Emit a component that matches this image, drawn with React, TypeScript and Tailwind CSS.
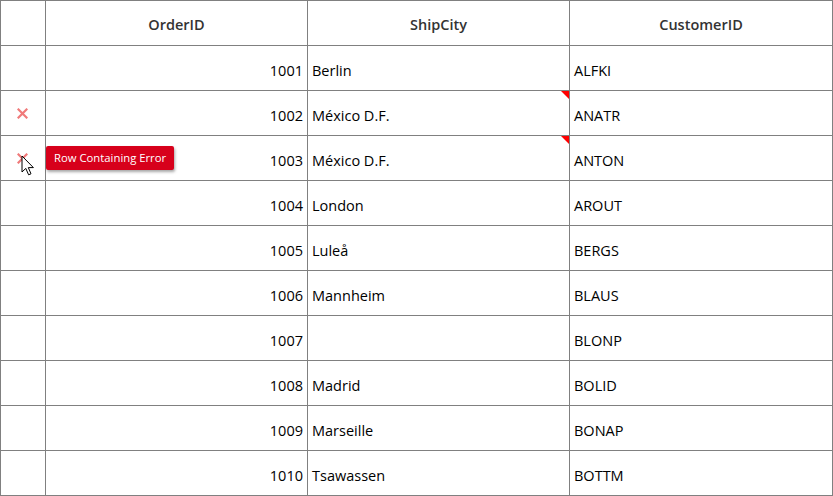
const ROWS = [
  { id: 1001, city: 'Berlin', customer: 'ALFKI', error: false },
  { id: 1002, city: 'México D.F.', customer: 'ANATR', error: true },
  { id: 1003, city: 'México D.F.', customer: 'ANTON', error: true },
  { id: 1004, city: 'London', customer: 'AROUT', error: false },
  { id: 1005, city: 'Luleå', customer: 'BERGS', error: false },
  { id: 1006, city: 'Mannheim', customer: 'BLAUS', error: false },
  { id: 1007, city: '', customer: 'BLONP', error: false },
  { id: 1008, city: 'Madrid', customer: 'BOLID', error: false },
  { id: 1009, city: 'Marseille', customer: 'BONAP', error: false },
  { id: 1010, city: 'Tsawassen', customer: 'BOTTM', error: false },
];

const cell = 'h-[45px] border-r border-b border-[#808080] flex items-center';

function ErrorMark() {
  return (
    <svg width="11" height="11" viewBox="0 0 11 11" aria-hidden>
      <path d="M1.5 1.5 L9.5 9.5 M9.5 1.5 L1.5 9.5" stroke="#f07a7a" strokeWidth="2.2" strokeLinecap="square" />
    </svg>
  );
}

function Cursor() {
  return (
    <svg width="14" height="22" viewBox="0 0 14 22" aria-hidden>
      <path
        d="M1 1 L1 17 L4.8 13.4 L7.6 19.8 L10 18.8 L7.3 12.6 L12.4 12.6 Z"
        fill="#fff"
        stroke="#000"
        strokeWidth="1"
        strokeLinejoin="round"
      />
    </svg>
  );
}

export default function App() {
  return (
    <div
      className="relative w-[833px] h-[496px] bg-white text-black"
      style={{ fontFamily: '"Open Sans", "Noto Sans", sans-serif' }}
    >
      <div className="grid grid-cols-[45px_262px_262px_263px] border-l border-t border-[#808080] text-[14.5px]">
        <div className={cell} />
        <div className={`${cell} justify-center pt-[3px] font-semibold text-[#333]`}>OrderID</div>
        <div className={`${cell} justify-center pt-[3px] font-semibold text-[#333]`}>ShipCity</div>
        <div className={`${cell} justify-center pt-[3px] font-semibold text-[#333]`}>CustomerID</div>

        {ROWS.map((r) => (
          <div key={r.id} className="contents">
            <div className={`${cell} justify-center pr-[2px]`}>{r.error ? <ErrorMark /> : null}</div>
            <div className={`${cell} justify-end pr-[4px] pt-[5px]`}>{r.id}</div>
            <div className={`${cell} relative pl-[4px] pt-[5px]`}>
              {r.city}
              {r.error ? (
                <span className="absolute right-0 top-0 h-0 w-0 border-l-[8px] border-t-[8px] border-l-transparent border-t-[#ff0000]" />
              ) : null}
            </div>
            <div className={`${cell} pl-[4px] pt-[5px]`}>{r.customer}</div>
          </div>
        ))}
      </div>

      <div className="absolute left-[46px] top-[146px] rounded-[2px] bg-[#d7001b] px-[8px] py-[4px] text-[11.3px] leading-[16px] text-white shadow-[1px_2px_3px_rgba(0,0,0,0.35)]">
        Row Containing Error
      </div>
      <div className="absolute left-[21px] top-[155px]">
        <Cursor />
      </div>
    </div>
  );
}
